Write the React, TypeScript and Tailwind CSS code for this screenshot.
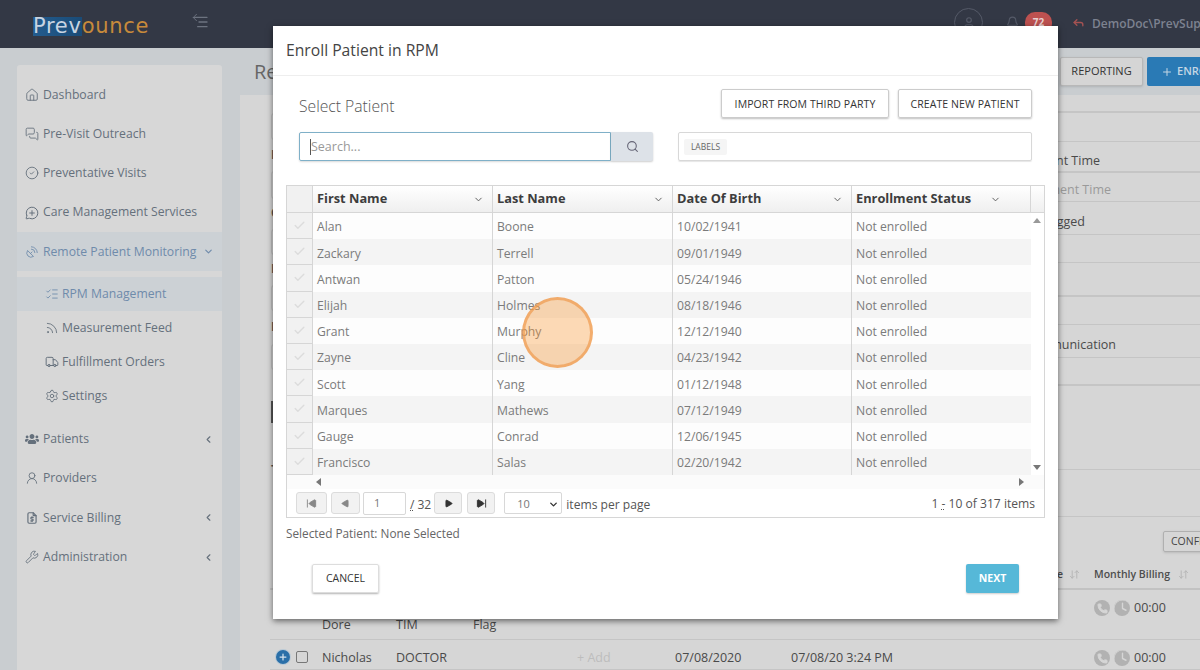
import React from "react";
import { ChevronDown, ChevronLeft, Search, Check, Home, MessagesSquare, CircleCheck, MessageCirclePlus, SatelliteDish, ListChecks, Rss, Truck, Settings, UserRound, Wrench, Bell, Reply, Plus, ArrowDownUp, Phone, Clock, AlignLeft, User, SkipBack, SkipForward, Play, ArrowLeft } from "lucide-react";
import { FaUsers } from "react-icons/fa";
import { TbFileDollar } from "react-icons/tb";

const f = { fontFamily: '"Open Sans", "Noto Sans", sans-serif' };

const rows = [
  ["Alan", "Boone", "10/02/1941"],
  ["Zackary", "Terrell", "09/01/1949"],
  ["Antwan", "Patton", "05/24/1946"],
  ["Elijah", "Holmes", "08/18/1946"],
  ["Grant", "Murphy", "12/12/1940"],
  ["Zayne", "Cline", "04/23/1942"],
  ["Scott", "Yang", "01/12/1948"],
  ["Marques", "Mathews", "07/12/1949"],
  ["Gauge", "Conrad", "12/06/1945"],
  ["Francisco", "Salas", "02/20/1942"],
];

function NavItem({ icon, label, chev, active }: { icon: React.ReactNode; label: string; chev?: "l" | "d"; active?: boolean }) {
  return (
    <div className={`flex items-center h-[39.3px] pl-[8px] pr-[8px] text-[12.2px] ${active ? "bg-[#ccd1d5] text-[#6f8bab]" : "text-[#65707c]"}`}>
      <span className="w-[18px] flex justify-start">{icon}</span>
      <span className="flex-1 whitespace-nowrap">{label}</span>
      {chev === "l" && <ChevronLeft size={11} strokeWidth={2.5} />}
      {chev === "d" && <ChevronDown size={11} strokeWidth={2.5} />}
    </div>
  );
}

function SubItem({ icon, label, active }: { icon: React.ReactNode; label: string; active?: boolean }) {
  return (
    <div className={`flex items-center h-[34px] pl-[28px] text-[12.2px] ${active ? "bg-[#ccd1d5] text-[#6f8bab]" : "text-[#65707c]"}`}>
      <span className="w-[17px] flex justify-start">{icon}</span>
      <span className="whitespace-nowrap">{label}</span>
    </div>
  );
}

function Sidebar() {
  const s = 14;
  return (
    <div className="w-[205px] bg-[#d7d7d7] rounded-t-[3px] pt-[10px] shrink-0">
      <NavItem icon={<Home size={s} strokeWidth={1.5} />} label="Dashboard" />
      <NavItem icon={<MessagesSquare size={s} strokeWidth={1.5} />} label="Pre-Visit Outreach" />
      <NavItem icon={<CircleCheck size={s} strokeWidth={1.5} />} label="Preventative Visits" />
      <NavItem icon={<MessageCirclePlus size={s} strokeWidth={1.7} />} label="Care Management Services" />
      <NavItem icon={<SatelliteDish size={s} strokeWidth={1.5} />} label="Remote Patient Monitoring" chev="d" active />
      <div className="h-[6px]" />
      <SubItem icon={<ListChecks size={s} strokeWidth={1.5} />} label="RPM Management" active />
      <SubItem icon={<Rss size={s} strokeWidth={1.5} />} label="Measurement Feed" />
      <SubItem icon={<Truck size={s} strokeWidth={1.7} />} label="Fulfillment Orders" />
      <SubItem icon={<Settings size={s} strokeWidth={1.5} />} label="Settings" />
      <div className="h-[6px]" />
      <NavItem icon={<FaUsers size={s} />} label="Patients" chev="l" />
      <NavItem icon={<UserRound size={s} strokeWidth={1.5} />} label="Providers" />
      <NavItem icon={<TbFileDollar size={s} />} label="Service Billing" chev="l" />
      <NavItem icon={<Wrench size={s} strokeWidth={1.5} />} label="Administration" chev="l" />
    </div>
  );
}

function Header() {
  return (
    <div className="h-[48px] bg-[#333845] flex items-center shrink-0">
      <div className="ml-[33px] mt-[5px] flex items-center h-[19px] text-[21px] leading-none tracking-[0.7px]" style={{ fontFamily: '"DejaVu Sans", sans-serif' }}>
        <span className="h-full flex items-center bg-gradient-to-r from-[#235c8e] to-[#1a4b77] text-[#c8d4e2]">Prev</span>
        <span className="text-[#c78a3b]">ounce</span>
      </div>
      <div className="ml-[42px] mb-[8px] text-[#6d7380] relative w-[20px] h-[16px]">
        <ArrowLeft size={11} className="absolute left-0 top-0" />
        <AlignLeft size={16} className="absolute left-[2px] top-[2px] -scale-x-100" />
      </div>
      <div className="ml-auto flex items-center text-[#7d8290] mb-[3px]">
        <div className="w-[29px] h-[29px] rounded-full border border-[#555a68] flex items-center justify-center mr-[23px] text-[#555a68]"><User size={14} /></div>
        <Bell size={13} className="text-[#555a68] mr-[6px]" />
        <div className="w-[27px] h-[22px] rounded-[10px] bg-[#bd5150] text-[#e8d0d0] text-[10px] font-bold flex items-center justify-center mr-[20px]">72</div>
        <Reply size={13} strokeWidth={2.5} className="text-[#a55252] mr-[7px]" />
        <span className="text-[12px] font-semibold whitespace-nowrap w-[108px] overflow-hidden mt-[2px]">DemoDoc\PrevSupport</span>
      </div>
    </div>
  );
}

function RightRow({ h, pt, pr, text, faint, thick }: { h: number; pt?: number; pr?: number; text?: string; faint?: boolean; thick?: boolean }) {
  return (
    <div className={`flex justify-end items-center whitespace-nowrap text-[12.5px] ${thick ? "border-b-2" : "border-b"} border-[#c5c5c5] ${faint ? "text-[#9a9a9a]" : "text-[#4a4a4a]"}`} style={{ height: h, paddingTop: pt, paddingRight: pr }}>
      {text}
    </div>
  );
}

function Billing() {
  return (
    <div className="flex items-center gap-[4px] text-[12.5px] text-[#4a4a4a]">
      <span className="w-[16px] h-[16px] rounded-full bg-[#b2b2b2] flex items-center justify-center"><Phone size={11} className="text-[#d6d6d6]" fill="#d6d6d6" /></span>
      <span className="w-[16px] h-[16px] rounded-full bg-[#b2b2b2] flex items-center justify-center overflow-hidden"><Clock size={21} strokeWidth={1.6} className="text-[#d6d6d6] shrink-0" /></span>
      <span>00:00</span>
    </div>
  );
}

function DataRow({ h, pt, namePt, name, tim, flag, add, date, time, plus }: { h: number; pt: number; namePt: number; name: string; tim: string; flag?: string; add?: boolean; date?: string; time?: string; plus?: boolean }) {
  return (
    <div className="ml-[30px] flex text-[12.5px] text-[#4a4a4a] border-b border-[#c5c5c5]" style={{ height: h }}>
      <div className="w-[52px] pl-[6px] flex items-start gap-[6px]" style={{ paddingTop: pt + 1 }}>
        {plus && <span className="w-[14px] h-[14px] rounded-full bg-[#2a6fa8] flex items-center justify-center ring-1 ring-[#b9c9d6]"><Plus size={10} strokeWidth={3} className="text-[#d6e2ec]" /></span>}
        {plus && <span className="w-[12px] h-[12px] border border-[#777] rounded-[2px] mt-[1px]" />}
      </div>
      <div className="w-[74px]" style={{ paddingTop: namePt }}>{name}</div>
      <div className="w-[77px]" style={{ paddingTop: namePt }}>{tim}</div>
      <div className="w-[104px]" style={{ paddingTop: namePt }}>{flag}</div>
      <div className="w-[98px] text-[#bdbdbd]" style={{ paddingTop: namePt }}>{add ? "+ Add" : ""}</div>
      <div className="w-[116px]" style={{ paddingTop: namePt }}>{date}</div>
      <div className="w-[303px]" style={{ paddingTop: namePt }}>{time}</div>
      <div style={{ paddingTop: pt }}><Billing /></div>
    </div>
  );
}

function LeftStubs() {
  const box = "w-[40px] border border-[#c2c2c2] rounded-[3px]";
  const label = "text-[12.5px] font-bold text-[#555] flex items-center";
  return (
    <div className="w-[70px] pl-[31px] pt-[18px] flex flex-col shrink-0">
      <div className={`h-[29px] ${box}`} />
      <div className={`h-[33px] ${label}`}>D</div>
      <div className={`h-[30px] ${box}`} />
      <div className={`h-[32px] ${label}`}>C</div>
      <div className={`h-[28px] ${box}`} />
      <div className={`h-[32px] ${label}`}>D</div>
      <div className={`h-[28px] ${box}`} />
      <div className={`h-[35px] ${label}`}>M</div>
      <div className={`h-[28px] ${box}`} />
      <div className="h-[34px]" />
      <div className="h-[23px] w-[8px] border-l-2 border-y-2 border-[#555]" />
      <div className={`h-[60px] mt-[38px] ${label} items-start`}>T</div>
    </div>
  );
}

function Background() {
  return (
    <div className="flex-1 min-w-0 ml-[18px] -mt-[17px] flex flex-col text-[#4a4a4a]">
      <div className="flex items-center justify-between h-[47px] shrink-0">
        <span className="ml-[14px] text-[20px] text-[#666]">Re</span>
        <div className="flex items-center gap-[4px] -mr-[32px] shrink-0">
          <div className="h-[29px] w-[83px] flex items-center justify-center bg-[#d5d5d5] border border-[#b8b8b8] rounded-[2px] text-[11px] text-[#333] shadow">REPORTING</div>
          <div className="h-[29px] w-[85px] flex items-center pl-[14px] bg-[#2a7ab5] rounded-[2px] text-[11px] font-semibold text-[#c4d6e4] whitespace-nowrap overflow-hidden"><Plus size={12} className="mr-[4px]" />ENROLL</div>
        </div>
      </div>
      <div className="flex-1 bg-[#d6d6d6] flex flex-col overflow-hidden">
        <div className="flex justify-between h-[422px] shrink-0">
          <LeftStubs />
          <div className="w-[142px] flex flex-col">
            <RightRow h={18} thick />
            <RightRow h={29} />
            <RightRow h={31} pt={10} pr={100} text="Enrollment Time" thick />
            <RightRow h={29} pt={7} pr={89} text="Assignment Time" faint />
            <RightRow h={33} pt={9} pr={115} text="Flagged" />
            <RightRow h={28} />
            <RightRow h={34} thick />
            <RightRow h={28} />
            <RightRow h={33} pt={9} pr={84} text="Communication" />
            <RightRow h={28} thick />
            <RightRow h={84} />
            <RightRow h={47} />
          </div>
        </div>
        <div className="ml-[30px] h-[73px] shrink-0 border-b-2 border-[#c2c2c2] flex flex-col items-end">
          <div className="-mr-[13px] mt-[14px] w-[50px] h-[21px] border border-[#b0b0b0] rounded-[2px] text-[10.5px] text-[#444] pl-[7px] flex items-center overflow-hidden shadow">CONFIG</div>
          <div className="flex-1 flex items-center pt-[9px] pr-[11px] text-[10.5px] font-semibold text-[#4d4d4d] whitespace-nowrap">
            <span className="mr-[6px]">Time</span>
            <ArrowDownUp size={11} className="text-[#b5b5b5] mr-[14px]" />
            <span className="w-[75px]">Monthly Billing</span>
            <ArrowDownUp size={11} className="text-[#b5b5b5] ml-[9px]" />
          </div>
        </div>
        <DataRow h={50} pt={9} namePt={26} name="Dore" tim="TIM" flag="Flag" />
        <DataRow h={30} pt={9} namePt={9} name="Nicholas" tim="DOCTOR" add date="07/08/2020" time="07/08/20 3:24 PM" plus />
      </div>
    </div>
  );
}

function PagerBtn({ children, w, ml }: { children: React.ReactNode; w: string; ml?: string }) {
  return <div className={`h-[22px] flex items-center justify-center rounded-[3px] border border-[#dcdcdc] bg-[#f2f2f2] shrink-0 ${w} ${ml ?? ""}`}>{children}</div>;
}

function Modal() {
  return (
    <div className="absolute left-[273px] top-[26px] w-[785px] h-[593px] bg-white shadow-[0_2px_6px_rgba(0,0,0,0.55)] flex flex-col text-[#555]">
      <div className="h-[50px] border-b border-[#eeeeee] flex items-center pl-[13px] text-[15.7px] text-[#444] shrink-0">Enroll Patient in RPM</div>
      <div className="flex flex-col pl-[13px] pr-[13px]">
        <div className="flex pl-[13px] pr-[13px] mt-[13px] h-[29px] justify-between items-start">
          <div className="text-[15.7px] leading-[22px] font-light text-[#555] mt-[6px]">Select Patient</div>
          <div className="flex gap-[9px] text-[10.5px] text-[#333] tracking-[0.1px]">
            <div className="w-[168px] h-[29px] pt-[2px] flex items-center justify-center border border-[#ccc] rounded-[2px] shadow-[0_1px_2px_rgba(0,0,0,0.25)]">IMPORT FROM THIRD PARTY</div>
            <div className="w-[134px] h-[29px] pt-[2px] flex items-center justify-center border border-[#ccc] rounded-[2px] shadow-[0_1px_2px_rgba(0,0,0,0.25)]">CREATE NEW PATIENT</div>
          </div>
        </div>
        <div className="flex pl-[13px] pr-[13px] mt-[14px] h-[29px] items-stretch">
          <div className="w-[312px] border border-[#7fb0c8] rounded-l-[2px] flex items-center pl-[10px] pt-[1px] text-[12.5px] text-[#999] shadow-[0_1px_2px_rgba(0,0,0,0.15)]">
            <span className="w-[1px] h-[16px] bg-[#555]" /><span>Search...</span>
          </div>
          <div className="w-[42px] bg-[#dde2e8] flex items-center justify-center rounded-r-[2px] text-[#667] shadow-[0_1px_2px_rgba(0,0,0,0.2)]"><Search size={13} /></div>
          <div className="ml-[25px] flex-1 border border-[#d8d8d8] rounded-[2px] flex items-center pl-[5px] pt-[1px] shadow-[0_1px_1px_rgba(0,0,0,0.1)]">
            <span className="bg-[#f5f5f5] rounded-[2px] h-[16px] w-[43px] flex items-center justify-center text-[8.5px] text-[#666]">LABELS</span>
          </div>
        </div>
        <div className="mt-[24px] w-[759px] h-[333px] border border-[#d6d6d6] flex flex-col relative">
          <div className="flex h-[27px] border-b border-[#d6d6d6] bg-gradient-to-b from-white to-[#efefef] text-[12.8px] font-bold text-[#3d3d3d] shrink-0">
            <div className="w-[26px] border-r border-[#d6d6d6] bg-[#f1f1f1]" />
            {[
              ["First Name", 180, 8],
              ["Last Name", 180, 8],
              ["Date Of Birth", 179, 8],
              ["Enrollment Status", 179, 29],
            ].map(([t, w, r]) => (
              <div key={t as string} className="flex items-center pl-[4px] border-r border-[#d6d6d6] justify-between" style={{ width: w as number, paddingRight: r as number }}>
                <span className="whitespace-nowrap">{t}</span>
                <ChevronDown size={11} className="text-[#555] shrink-0" />
              </div>
            ))}
          </div>
          <div className="flex flex-col relative">
            {rows.map((r, i) => (
              <div key={i} className={`flex h-[26.2px] w-[744px] text-[12.2px] text-[#7b7b7b] ${i % 2 ? "bg-[#f4f4f4]" : "bg-[#fdfdfd]"}`}>
                <div className="w-[26px] shrink-0 border-r border-b border-[#d6d6d6] bg-[#f1f1f1] flex items-center justify-center text-[#dcdcdc]"><Check size={13} strokeWidth={2.5} /></div>
                <div className="w-[180px] flex items-center pl-[4px] pt-[3px] border-r border-[#d6d6d6]">{r[0]}</div>
                <div className="w-[180px] flex items-center pl-[4px] pt-[3px] border-r border-[#d6d6d6]">{r[1]}</div>
                <div className="w-[179px] flex items-center pl-[4px] pt-[3px] border-r border-[#d6d6d6]">{r[2]}</div>
                <div className="flex-1 flex items-center pl-[4px] pt-[3px]">Not enrolled</div>
              </div>
            ))}
            <div className="absolute right-[3px] top-[5px] w-0 h-0 border-x-[4px] border-x-transparent border-b-[5px] border-b-[#999]" />
            <div className="absolute right-[3px] bottom-[5px] w-0 h-0 border-x-[4px] border-x-transparent border-t-[5px] border-t-[#777]" />
          </div>
          <div className="h-[14px] flex items-center justify-between pl-[29px] pr-[20px] bg-[#fbfbfb] shrink-0">
            <div className="w-0 h-0 border-y-[4px] border-y-transparent border-r-[5px] border-r-[#777]" />
            <div className="w-0 h-0 border-y-[4px] border-y-transparent border-l-[5px] border-l-[#777]" />
          </div>
          <div className="flex items-center h-[29px] pl-[9px] pr-[9px] pt-[1px] text-[12.1px] text-[#555]">
            <PagerBtn w="w-[31px]"><SkipBack size={11} className="text-[#888]" fill="#888" /></PagerBtn>
            <PagerBtn w="w-[29px]" ml="ml-[4px]"><Play size={9} className="text-[#888] rotate-180" fill="#888" /></PagerBtn>
            <div className="ml-[3px] w-[43px] h-[23px] border border-[#d8d8d8] rounded-[2px] text-[11px] text-[#777] flex items-center pl-[10px]">1</div>
            <span className="ml-[4px] mt-[3px] underline decoration-dotted">/</span><span className="ml-[3px] mt-[3px]">32</span>
            <PagerBtn w="w-[28px]" ml="ml-[3px]"><Play size={9} className="text-[#333]" fill="#333" /></PagerBtn>
            <PagerBtn w="w-[28px]" ml="ml-[5px]"><SkipForward size={11} className="text-[#333]" fill="#333" /></PagerBtn>
            <div className="ml-[9px] w-[58px] h-[22px] border border-[#d8d8d8] rounded-[2px] text-[11px] text-[#777] flex items-center justify-between pl-[12px] pr-[2px] pt-[2px]">10<ChevronDown size={11} strokeWidth={3} className="text-[#333]" /></div>
            <span className="ml-[4px] mt-[3px]">items per page</span>
            <span className="ml-auto mt-[1px]">1 <span className="underline decoration-dotted">-</span> 10 of 317 items</span>
          </div>
        </div>
        <div className="mt-[7px] text-[11.8px] text-[#666]">Selected Patient: None Selected</div>
        <div className="flex justify-between pl-[26px] pr-[26px] mt-[21px]">
          <div className="w-[67px] h-[29px] pt-[1px] flex items-center justify-center border border-[#ddd] rounded-[2px] text-[10.5px] text-[#333] shadow-[0_1px_2px_rgba(0,0,0,0.3)]">CANCEL</div>
          <div className="w-[53px] h-[29px] pt-[1px] flex items-center justify-center bg-[#56b8d8] rounded-[2px] text-[10.5px] font-bold text-white shadow-[0_1px_2px_rgba(0,0,0,0.2)]">NEXT</div>
        </div>
      </div>
    </div>
  );
}

export default function App() {
  return (
    <div className="relative w-[1200px] h-[670px] overflow-hidden bg-[#c9cdd0] flex flex-col" style={f}>
      <Header />
      <div className="flex-1 flex pl-[17px] pt-[17px] min-h-0">
        <Sidebar />
        <Background />
      </div>
      <Modal />
      <div className="absolute left-[522px] top-[297px] w-[71px] h-[71px] rounded-full bg-[#f8942f]/35 border-[3px] border-[#ee9a4e]/70" />
    </div>
  );
}
